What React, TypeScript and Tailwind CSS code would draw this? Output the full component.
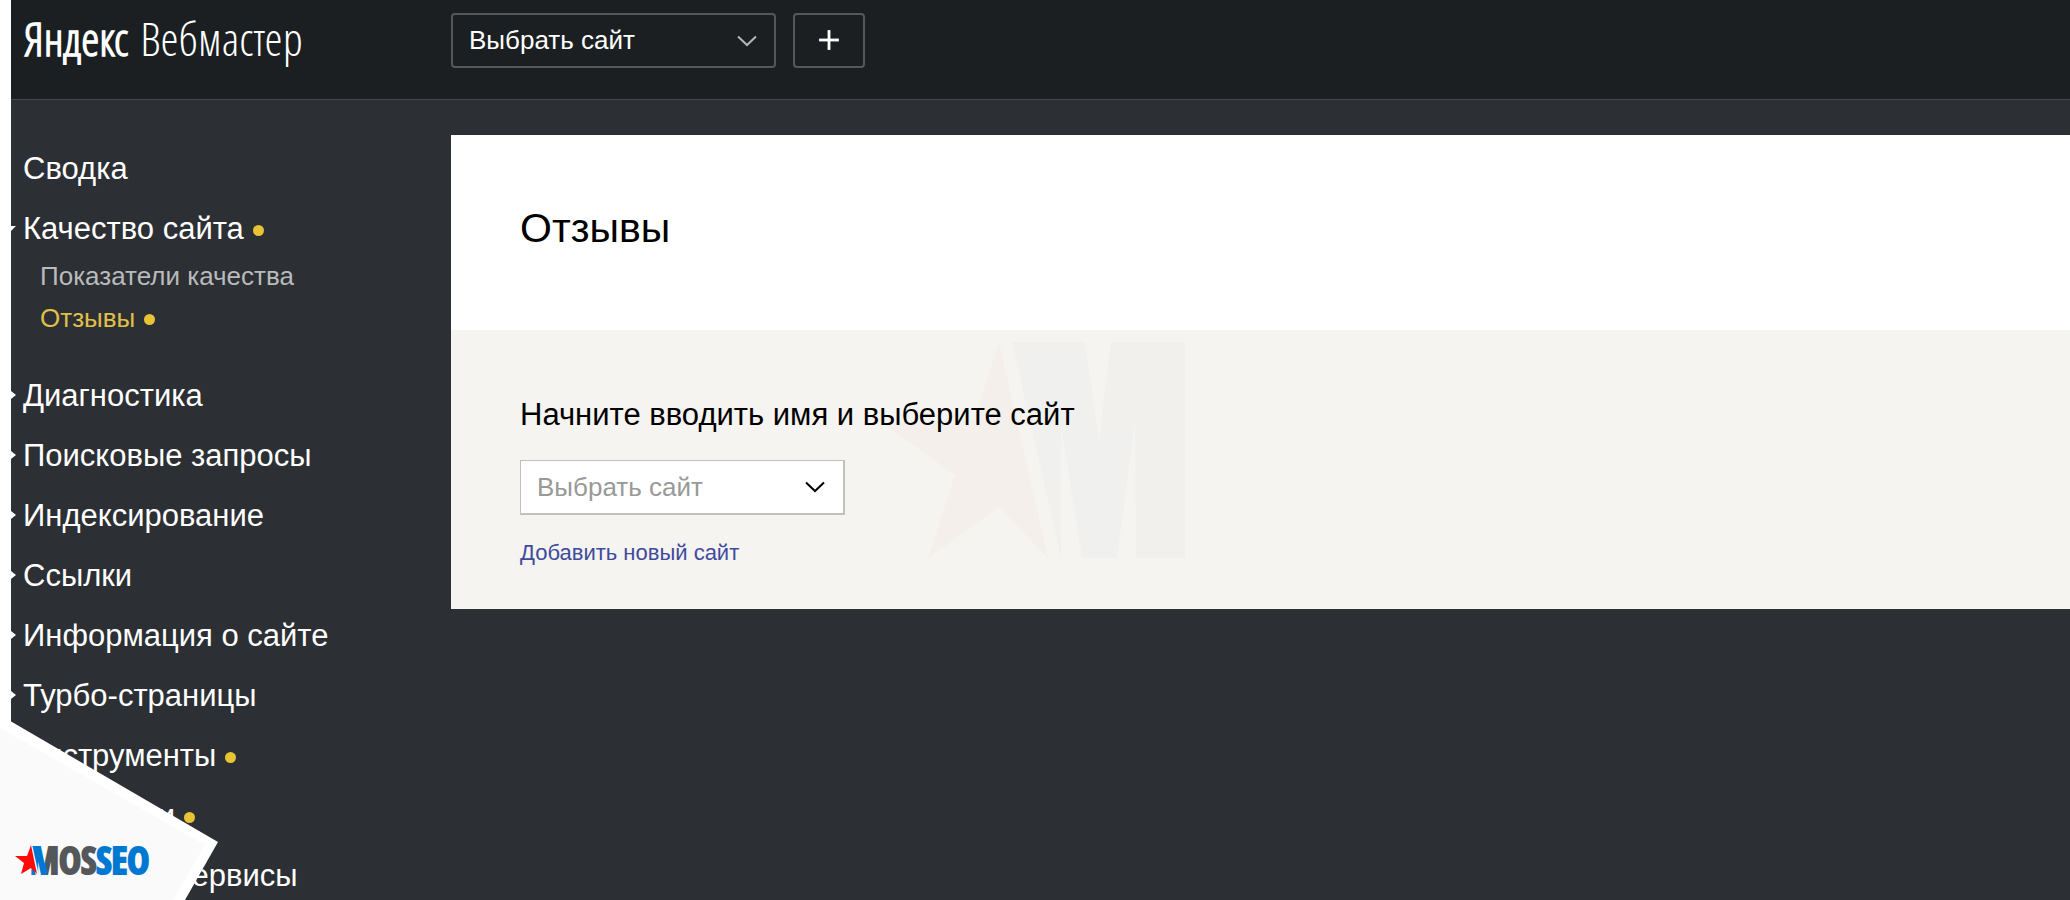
import React from 'react';
import { Plus } from 'lucide-react';

interface SubItem {
  title: string;
  active?: boolean;
}

interface NavItem {
  title: string;
  marker?: 'open' | 'closed';
  dot?: boolean;
  children?: SubItem[];
}

const navItems: NavItem[] = [
  { title: 'Сводка' },
  {
    title: 'Качество сайта',
    marker: 'open',
    dot: true,
    children: [{ title: 'Показатели качества' }, { title: 'Отзывы', active: true }],
  },
  { title: 'Диагностика', marker: 'closed' },
  { title: 'Поисковые запросы', marker: 'closed' },
  { title: 'Индексирование', marker: 'closed' },
  { title: 'Ссылки', marker: 'closed' },
  { title: 'Информация о сайте', marker: 'closed' },
  { title: 'Турбо-страницы', marker: 'closed' },
  { title: 'Инструменты', marker: 'closed', dot: true },
  { title: 'Настройки', marker: 'closed', dot: true },
  { title: 'Полезные сервисы' },
];

const Dot: React.FC = () => <span className="mt-0.5 size-[11px] rounded-full bg-[#e8c335]" />;

const Marker: React.FC<{ type?: 'open' | 'closed' }> = ({ type }) => (
  <svg viewBox="0 0 5 10" className="mr-[7px] mb-0.5 h-[10px] w-[5px] shrink-0 fill-white">
    {type === 'closed' && <path d="M0 1L5 5L0 9Z" />}
    {type === 'open' && <path d="M0 3H5L0 8Z" />}
  </svg>
);

const Chevron: React.FC<{ className: string }> = ({ className }) => (
  <svg viewBox="0 0 20 12" fill="none" strokeWidth="2" className={className}>
    <path d="M1 1.5L10 10L19 1.5" />
  </svg>
);

const Watermark: React.FC = () => (
  <svg viewBox="-4 0 304 216" className="pointer-events-none absolute top-3 left-[430px] h-[216px] w-[304px]">
    <path className="fill-[#f5efeb]" d="M114 0L163 216L114 165L43 216L70 133L-3 81L89 78Z" />
    <path className="fill-[#f0f0ef]" d="M127 0H200L214 98L250 78L232 216H197L176 85V216Z" />
    <path className="fill-[#f1f0ec]" d="M226 0H300V216H251L250 78L214 98Z" />
  </svg>
);

const CornerBadge: React.FC = () => (
  <svg viewBox="0 0 219 185" className="absolute bottom-0 left-0 h-[185px] w-[219px]">
    <defs>
      <linearGradient id="badge-blue" gradientUnits="userSpaceOnUse" x1="32" y1="146" x2="57" y2="142">
        <stop offset="0.52" stopColor="#0078d2" />
        <stop offset="0.52" stopColor="#54585b" />
      </linearGradient>
    </defs>
    <path className="fill-white" d="M0 0L218 127L185 185H0Z" />
    <path className="fill-[#fafafa]" d="M0 13L205 130L173 185H0Z" />
    <text x="30" y="159" strokeWidth="2" className="font-['Open_Sans_Condensed','Roboto_Condensed',sans-serif] text-[37px] font-bold">
      <tspan fill="url(#badge-blue)" stroke="url(#badge-blue)">M</tspan>
      <tspan fill="#54585b" stroke="#54585b">OS</tspan>
      <tspan fill="#0078d2" stroke="#0078d2">SEO</tspan>
    </text>
    <path className="fill-[#fafafa]" d="M28 129H32L39 161H36Z" />
    <path className="fill-[#ff0a0a]" d="M31 130L37 159L31 153L21 159L24 148L15 141L27 141Z" />
  </svg>
);

const App: React.FC = () => {
  return (
    <div className="relative min-h-screen overflow-hidden bg-white pl-[11px] font-['Liberation_Sans',Arial,sans-serif]">
      <div className="min-h-screen bg-[#2c2f33]">
        <header className="flex h-[100px] items-start border-b border-[#45494c] bg-[#1b1f22] pt-[13px]">
          <div className="w-[440px] shrink-0 pl-[13px]">
            <a
              href="#"
              className="flex gap-3 font-['Open_Sans_Condensed_Light','Roboto_Condensed',sans-serif] text-[46px] leading-[50px] whitespace-nowrap text-white"
            >
              <span className="font-bold">Яндекс</span>
              <span className="font-light">Вебмастер</span>
            </a>
          </div>
          <div className="relative w-[325px]">
            <select
              aria-label="Выбрать сайт"
              className="h-[55px] w-full appearance-none rounded border-2 border-[#54585a] bg-transparent px-4 text-[26px] text-white"
            >
              <option>Выбрать сайт</option>
            </select>
            <Chevron className="pointer-events-none absolute top-[22px] right-[19px] h-3 w-5 stroke-[#b4b6b7]" />
          </div>
          <button
            type="button"
            aria-label="Добавить сайт"
            className="ml-[17px] flex h-[55px] w-[72px] items-center justify-center rounded border-2 border-[#54585a] pb-0.5 text-white"
          >
            <Plus size={34} strokeWidth={2} strokeLinecap="butt" />
          </button>
        </header>

        <div className="flex items-start">
          <nav className="w-[440px] shrink-0 pt-[49px]">
            <ul className="flex flex-col gap-5">
              {navItems.map((item) => (
                <li key={item.title}>
                  <a href="#" className="flex h-10 items-center text-[31px] leading-10 whitespace-nowrap text-white">
                    <Marker type={item.marker} />
                    <span className="mr-[9px]">{item.title}</span>
                    {item.dot && <Dot />}
                  </a>
                  {item.children && (
                    <ul className="mt-[6px] mb-[17px] pl-[29px]">
                      {item.children.map((child) => (
                        <li key={child.title}>
                          <a
                            href="#"
                            className={
                              child.active
                                ? 'flex items-center gap-[9px] text-[26px] leading-[42px] text-[#e0bf4a]'
                                : 'flex items-center gap-[9px] text-[26px] leading-[42px] text-[#b9babb]'
                            }
                          >
                            {child.title}
                            {child.active && <Dot />}
                          </a>
                        </li>
                      ))}
                    </ul>
                  )}
                </li>
              ))}
            </ul>
          </nav>

          <main className="mt-[35px] flex-1">
            <div className="bg-white px-[69px] pt-[67px] pb-[76px]">
              <h1 className="text-[41px] leading-[52px] text-black">Отзывы</h1>
            </div>
            <section className="relative bg-[#f5f4f0] px-[69px] pt-[65px] pb-[38px]">
              <Watermark />
              <div className="relative">
                <label htmlFor="site" className="block text-[31px] leading-10 text-black">
                  Начните вводить имя и выберите сайт
                </label>
                <div className="relative mt-[25px] h-[55px] w-[325px]">
                  <select
                    id="site"
                    className="h-full w-full appearance-none border border-r-2 border-b-2 border-[#c0c0be] bg-white px-4 text-[26px] text-[#999]"
                  >
                    <option>Выбрать сайт</option>
                  </select>
                  <Chevron className="pointer-events-none absolute top-[21px] right-5 h-3 w-5 stroke-black" />
                </div>
                <div className="mt-[22px] leading-8">
                  <a href="#" className="text-[22px] text-[#3f4a9c]">
                    Добавить новый сайт
                  </a>
                </div>
              </div>
            </section>
          </main>
        </div>
      </div>
      <CornerBadge />
    </div>
  );
};

export default App;
